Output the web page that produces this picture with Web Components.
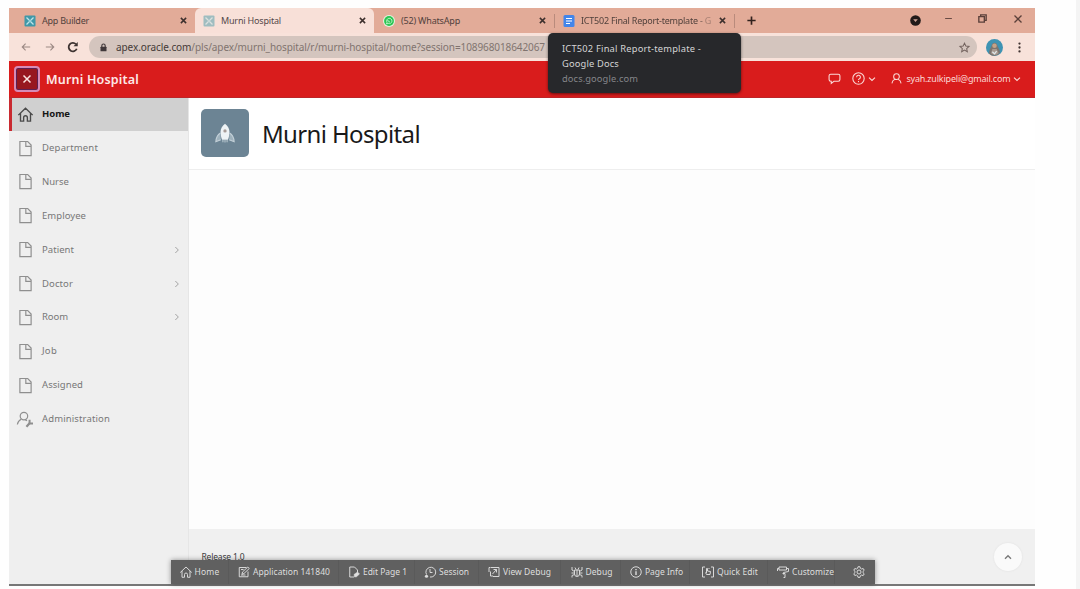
<!DOCTYPE html>
<html lang="en">
<head>
<meta charset="utf-8">
<title>Murni Hospital</title>
<style>
html, body { margin: 0; height: 100%; overflow: hidden; background: #fefefe; }
body { font-family: "Noto Sans", "Open Sans", sans-serif; }
</style>
</head>
<body>
<desktop-page></desktop-page>
<script>
const ICONS = {
  apex: '<rect x="1" y="1" width="22" height="22" rx="2" fill="#3f98a8" stroke="none"/><path d="M5 5l5 5M19 5l-5 5M5 19l5-5M19 19l-5-5" stroke="#bfe3e8" stroke-width="2.6"/><circle cx="12" cy="12" r="3" fill="#9dd3db" stroke="none"/>',
  close: '<path d="M5 5l14 14M19 5L5 19"/>',
  whatsapp: '<circle cx="12" cy="12" r="12" fill="#e4f3df" stroke="none"/><circle cx="12" cy="12" r="9.8" fill="#2ac552" stroke="none"/><path d="M7 18l1-3.500a5.300 5.300 0 1 1 2.400 2.200z" stroke="#d6f7dc" stroke-width="1.600"/><path d="M9.500 10c.5 2.200 2 3.500 4.500 4" stroke="#d6f7dc" stroke-width="1.800"/>',
  docs: '<rect x="1" y="0" width="22" height="24" rx="3" fill="#4285ea" stroke="none"/><path d="M6 7h12M6 12h12M6 17h8" stroke="#fff" stroke-width="2.300"/>',
  plus: '<path d="M12 3v18M3 12h18"/>',
  update: '<circle cx="12" cy="12" r="11.500" fill="#211a19" stroke="none"/><path d="M7 9.500h10l-5 6z" fill="#cfa497" stroke="none"/>',
  min: '<path d="M3 12h18"/>',
  restore: '<path d="M4 8h12v12H4zM8 8V4h12v12h-4"/>',
  back: '<path d="M22 12H3M11 4l-8 8 8 8"/>',
  forward: '<path d="M2 12h19M13 4l8 8-8 8"/>',
  reload: '<path d="M19.500 15.500A8.400 8.400 0 1 1 18 6.500"/><path d="M21.500 2v8.500H13z" fill="currentColor" stroke="none"/>',
  lock: '<rect x="4" y="10" width="16" height="12" rx="1.500" fill="currentColor" stroke="none"/><path d="M7.500 11V7a4.500 4.500 0 0 1 9 0v4"/>',
  star: '<path d="M12 2.500l2.900 6.400 7 .8-5.200 4.700 1.500 6.900L12 17.800l-6.200 3.500 1.500-6.900L2.100 9.700l7-.8z"/>',
  avatar: '<circle cx="12" cy="12" r="12" fill="#3f93b3" stroke="none"/><path d="M4 20C5 14 7 12 8 9c1-5 7-5 8 0 1 3 3 5 4 10-4 6-12 6-16 1z" fill="#7c746f" stroke="none"/><circle cx="12" cy="9.500" r="3.200" fill="#c4a288" stroke="none"/><path d="M7 20l2-6h6l3 6q-5 5-11 0z" fill="#a89a90" stroke="none"/><path d="M9 18l3 3 3-4" stroke="#e0e8ea" stroke-width="1.800"/>',
  dots: '<g fill="currentColor" stroke="none"><circle cx="12" cy="3.500" r="2.500"/><circle cx="12" cy="12" r="2.500"/><circle cx="12" cy="20.500" r="2.500"/></g>',
  chat: '<path d="M5 4h14a3 3 0 0 1 3 3v7a3 3 0 0 1-3 3h-8l-5 4v-4H5a3 3 0 0 1-3-3V7a3 3 0 0 1 3-3z"/>',
  help: '<circle cx="12" cy="12" r="10.500"/><path d="M8.500 9.500a3.500 3.500 0 1 1 4.800 3.200q-1.300.6-1.300 2"/><path d="M12 16.500v2.300"/>',
  user: '<circle cx="12" cy="8" r="6.200"/><path d="M2 22.500q1-7 6.500-9M22 22.500q-1-7-6.500-9"/>',
  down: '<path d="M3 8l9 8.500L21 8"/>',
  up: '<path d="M3 17l9-9 9 9"/>',
  right: '<path d="M7 3l9 9-9 9"/>',
  home: '<path d="M.5 13L12 2l11.500 11M4 10V22.500H9V17a3 3 0 0 1 6 0v5.500h5V10"/>',
  page: '<path d="M3 .8h12.500L21 6.500v17H3zM12.500 1v7.500H21"/>',
  admin: '<circle cx="9.500" cy="6.500" r="6"/><path d="M-1 20q1-6 6-8.500"/><path d="M11.500 12.500l3 1.500"/><path d="M13.500 23.500l5-5.500" stroke-width="3.600"/><path d="M18.500 12.500v6h5.500" stroke-width="3.200"/>',
  rocket: '<path d="M12 1c7 5 6 13 3.500 19h-7C6 14 5 6 12 1z" fill="#eef3f5" stroke="none"/><circle cx="12" cy="9.500" r="2" fill="#a79c98" stroke="none"/><path d="M6.500 12Q1.500 15 1 22.500l6-2.500M17.500 12q5 3 5.500 10.500l-6-2.500" fill="#9fb2bd" stroke="#c3d0d8" stroke-width="1.300"/><path d="M9.500 20.500v2.500M12 20.500v3M14.500 20.500v2.500" stroke="#b9c8d0" stroke-width="1.300"/>',
  edit: '<path d="M17 3H2.500v18.500H20V11"/><path d="M8 16.500l1-4.500L19.500 2l3 3-10.500 10z"/><path d="M6 7h5M6 18h9"/>',
  pageEdit: '<path d="M12 22H3.500V2H13l6 6v5"/><path d="M12 17l1 5 4-.5 6-5.500-4-4z" fill="currentColor" stroke-width="1"/>',
  session: '<path d="M5 17A9.800 9.800 0 1 1 12 22"/><path d="M12 6v7h5"/><circle cx="5" cy="20.500" r="3.200" fill="currentColor" stroke="none"/>',
  viewDebug: '<path d="M6 3h16v18H10M2 3v9M2 3h3"/><path d="M11 7h6v6M17 7l-8 9M5 11v9h5"/>',
  bug: '<path d="M7 8h10v8a5 5 0 0 1-10 0zM12 8v12M2 2v6l5 3M22 2v6l-5 3M1 14h6M17 14h6M2 23v-4l5-2M22 23v-4l-5-2M8 3l2 4M16 3l-2 4"/>',
  info: '<circle cx="12" cy="12" r="10.500"/><path d="M12 10.500V18M12 5.800v2.500" stroke-width="2.800"/>',
  quick: '<path d="M6 2H1v20h5M18 2h5v20h-5"/><path d="M9 17l-2-4M9 17h7l1-6-6-1V5H9v9"/><path d="M13 6l2-2" />',
  paint: '<path d="M4 2h15v6H4zM19 5h4v6l-10 2v4M4 5H1v5"/><path d="M11 15h5v8h-3"/>',
  gear: '<path d="M10 1.500h4l.8 3.200 2.400 1.300 3.200-1 2 3.500-2.400 2.300v2.600l2.400 2.300-2 3.500-3.200-1-2.400 1.300-.8 3.200h-4l-.8-3.200L6.800 18l-3.200 1-2-3.500L4 13.200v-2.600L1.600 8.500l2-3.500 3.200 1 2.400-1.300z"/><circle cx="12" cy="12" r="4"/>'
};

class BaseElement extends HTMLElement {
  connectedCallback() {
    if (this.shadowRoot) return;
    this.attachShadow({ mode: 'open' }).innerHTML = `<style>${this.css()}</style>${this.html()}`;
    this.ready();
  }
  a(n, d = '') { return this.getAttribute(n) ?? d; }
  css() { return ''; }
  html() { return '<slot></slot>'; }
  ready() {}
}

// <ui-icon name size stroke>
customElements.define('ui-icon', class extends BaseElement {
  css() { return `:host{display:block;flex:none;width:${this.a('size', 12)}px;height:${this.a('size', 12)}px} svg{display:block;width:100%;height:100%;overflow:visible}`; }
  html() { return `<svg viewBox="0 0 24 24" fill="none" stroke="currentColor" stroke-width="${this.a('stroke', 2)}">${ICONS[this.a('name')]}</svg>`; }
});

// One line of text whose tracking is adjusted so that it spans `w` pixels.
customElements.define('fit-text', class extends BaseElement {
  css() { return `:host{display:block;flex:none;white-space:nowrap;width:${this.a('w')}px} span{display:inline-block}`; }
  html() { return '<span><slot></slot></span>'; }
  ready() { this.fit(this.textContent.length); }
  fit(n) {
    const s = this.shadowRoot.querySelector('span');
    s.style.letterSpacing = '0px';
    s.style.letterSpacing = ((+this.a('w') - s.getBoundingClientRect().width) / n) + 'px';
  }
});

customElements.define('browser-tab', class extends BaseElement {
  css() { return `:host{display:flex;align-items:center;box-sizing:border-box;height:25px;font-size:9px;line-height:14px;color:#51413c;padding-left:14px}
    :host([active]){background:#f8e0d8;border-radius:6px 6px 0 0;color:#54484a}
    :host([active]) .ic{opacity:.48}
    .ic{margin-right:6px} .x{margin-left:auto;color:#3d302d}`; }
  html() { return `<ui-icon class="ic" name="${this.a('icon')}" size="12"></ui-icon><slot></slot><ui-icon class="x" name="close" size="9" stroke="4"></ui-icon>`; }
});

customElements.define('tab-strip', class extends BaseElement {
  css() { return `:host{display:flex;height:25px;background:#e2ab98;align-items:center}
    browser-tab{flex:none} .t1{width:186px;padding:0 7px 0 15px}.t2{width:179px;padding:0 7px 0 8px}.t3{width:173px;padding:0 0 0 9px}
    .t4{width:180px;padding:0 8px 0 8px}.sep{width:1px;height:14px;background:#b98b7c}
    .t4 fit-text{-webkit-mask-image:linear-gradient(90deg,#000 90%,#0006 96%)}
    .plus{margin-left:11px;color:#31211d}.win{display:flex;align-items:center;margin-left:auto;color:#5b403a}`; }
  html() { return `<browser-tab class="t1" icon="apex"><fit-text w="47">App Builder</fit-text></browser-tab>
    <browser-tab class="t2" icon="apex" active><fit-text w="60">Murni Hospital</fit-text></browser-tab>
    <browser-tab class="t3" icon="whatsapp"><fit-text w="59">(52) WhatsApp</fit-text></browser-tab>
    <span class="sep" style="margin-left:7px"></span>
    <browser-tab class="t4" icon="docs"><fit-text w="130">ICT502 Final Report-template - G</fit-text></browser-tab>
    <span class="sep" style="margin-left:-1px"></span><ui-icon class="plus" name="plus" size="11" stroke="3.6"></ui-icon>
    <div class="win"><ui-icon name="update" size="11"></ui-icon><ui-icon name="min" size="9" stroke="2.4" style="margin:-4px 0 0 23px"></ui-icon><ui-icon name="restore" size="11" stroke="3" style="margin:-4px 0 0 24px"></ui-icon><ui-icon name="close" size="12" stroke="2.6" style="margin:-4px 11px 0 24px"></ui-icon></div>`; }
});

customElements.define('address-bar', class extends BaseElement {
  css() { return `:host{display:flex;align-items:center;box-sizing:border-box;height:28px;background:#f8e2da;color:#9b8984;padding-left:12px}
    .pill{display:flex;align-items:center;box-sizing:border-box;width:888px;height:22px;border-radius:11px;background:#d4c5be;margin-left:10px;padding-left:10px;font-size:10px;line-height:16px;color:#81746f}
    b{font-weight:400;color:#443a38}`; }
  html() { return `<ui-icon name="back" size="10" stroke="2.6"></ui-icon><ui-icon name="forward" size="10" stroke="2.6" style="margin-left:14px"></ui-icon><ui-icon name="reload" size="12" stroke="3.6" style="margin-left:12px;color:#3e3432"></ui-icon>
    <div class="pill"><ui-icon name="lock" size="9" stroke="3" style="color:#40383a"></ui-icon><fit-text w="429" style="margin-left:8px"><b>apex.oracle.com</b>/pls/apex/murni_hospital/r/murni-hospital/home?session=108968018642067</fit-text>
    <ui-icon name="star" size="11" stroke="2.2" style="margin:0 7px 0 auto;color:#73635e"></ui-icon></div>
    <ui-icon name="avatar" size="17" style="margin-left:9px"></ui-icon><ui-icon name="dots" size="11" style="margin-left:11px;color:#403331"></ui-icon>`; }
});

customElements.define('app-header', class extends BaseElement {
  css() { return `:host{display:flex;align-items:center;box-sizing:border-box;height:36.500px;background:#d91c1c;color:#fbd9d6;padding:0 14px 0 5px;border-bottom:1px solid #bd2528}
    .btn{display:flex;align-items:center;justify-content:center;box-sizing:border-box;width:26px;height:26px;border:2px solid #d68bb5;border-radius:4px;background:#97171f;color:#fbe3e0;box-shadow:inset 0 0 0 1px #5b2053}
    .name{font-size:12.500px;font-weight:600;line-height:18px;margin:2px 0 0 6px;color:#fde9e7}
    .r{display:flex;align-items:center;margin-left:auto;font-size:9px;line-height:14px}`; }
  html() { return `<div class="btn"><ui-icon name="close" size="12" stroke="3"></ui-icon></div><fit-text class="name" w="93">Murni Hospital</fit-text>
    <div class="r"><ui-icon name="chat" size="13" stroke="2"></ui-icon><ui-icon name="help" size="13" stroke="2" style="margin-left:11px"></ui-icon><ui-icon name="down" size="8" stroke="3.4" style="margin-left:3px"></ui-icon><ui-icon name="user" size="11" stroke="2.2" style="margin-left:15px"></ui-icon><fit-text w="104" style="margin-left:4px">syah.zulkipeli@gmail.com</fit-text><ui-icon name="down" size="8" stroke="3.400" style="margin-left:3px"></ui-icon></div>`; }
});

customElements.define('nav-item', class extends BaseElement {
  css() { return `:host{display:flex;align-items:center;box-sizing:border-box;height:33.900px;padding:0 7px 0 9px;font-size:9.500px;line-height:16px;color:#777}
    :host([active]){height:33px;margin-bottom:.6px;background:#d0d0d0;color:#161616;font-weight:700;border-left:3px solid #c92a30;padding-left:6px}
    .i{width:15px;display:flex;justify-content:center;color:#8f8f8f;margin-right:9px;flex:none} :host([active]) .i{color:#4a4a4a}
    .c{margin-left:auto;color:#a3a3a3}`; }
  html() { const n = this.a('icon', 'page');
    return `<span class="i"><ui-icon name="${n}" size="15" stroke="${n === 'home' ? 2.2 : 1.9}"></ui-icon></span><fit-text w="${this.a('w')}"><slot></slot></fit-text>${this.hasAttribute('more') ? '<ui-icon class="c" name="right" size="8" stroke="3"></ui-icon>' : ''}`; }
  ready() { this.shadowRoot.querySelector('fit-text').fit(this.textContent.length); }
});

customElements.define('side-nav', class extends BaseElement {
  css() { return `:host{display:block;box-sizing:border-box;width:180px;background:#efefef;border-right:1px solid #e6e6e6}`; }
  html() { return `<nav><nav-item icon="home" w="28" active>Home</nav-item><nav-item w="56">Department</nav-item><nav-item w="27">Nurse</nav-item><nav-item w="44">Employee</nav-item><nav-item w="32" more>Patient</nav-item><nav-item w="31" more>Doctor</nav-item><nav-item w="26" more>Room</nav-item><nav-item w="15">Job</nav-item><nav-item w="41">Assigned</nav-item><nav-item icon="admin" w="68">Administration</nav-item></nav>`; }
});

customElements.define('page-content', class extends BaseElement {
  css() { return `:host{display:flex;flex-direction:column;flex:1;background:#fdfdfd}
    header{display:flex;align-items:center;box-sizing:border-box;height:72px;background:#fff;border-bottom:1px solid #eee;padding:0 0 0 12.400px}
    .logo{display:flex;align-items:center;justify-content:center;width:48px;height:48px;border-radius:5px;background:#6c8494}
    h1{margin:2px 0 0 12.600px;font-size:24px;line-height:34px;font-weight:400;color:#191919}
    main{flex:1}
    footer{display:flex;box-sizing:border-box;height:55px;background:#f0f0f0;padding:20px 13px 0 12.500px;font-size:8.500px;line-height:16px;color:#3c3c3c}
    .top{display:flex;align-items:center;justify-content:center;width:28px;height:28px;border-radius:50%;background:#fafafa;box-shadow:0 0 2px #ddd;margin:-6px 0 0 auto;color:#787878}`; }
  html() { return `<header><div class="logo"><ui-icon name="rocket" size="20"></ui-icon></div><h1><fit-text w="158">Murni Hospital</fit-text></h1></header><main></main>
    <footer><fit-text w="43">Release 1.0</fit-text><div class="top"><ui-icon name="up" size="8" stroke="4"></ui-icon></div></footer>`; }
});

customElements.define('dev-toolbar', class extends BaseElement {
  css() { return `:host{display:flex;height:24px;background:#606060;color:#dedede;font-size:8.500px;line-height:14px;box-shadow:0 0 5px #0006}
    div{display:flex;align-items:center;box-sizing:border-box;padding-left:9px;border-right:1px solid #5a5a5a}
    fit-text{margin-left:3px}`; }
  html() {
    return [['home', 58.5, 25, 'Home'], ['edit', 110, 77, 'Application 141840'], ['pageEdit', 76, 44, 'Edit Page 1'], ['session', 64, 30, 'Session'], ['viewDebug', 82, 48, 'View Debug'], ['bug', 60, 27, 'Debug'], ['info', 69, 38, 'Page Info'], ['quick', 78, 41, 'Quick Edit'], ['paint', 67, 42, 'Customize'], ['gear', 39.5, 0, '']]
      .map(([i, w, t, s]) => `<div style="width:${w}px${i === 'quick' ? ';padding-left:12px' : i === 'bug' ? ';padding-left:9.5px' : i === 'gear' ? ';padding-left:17.5px;border:0' : ''}"><ui-icon name="${i}" size="12" stroke="1.900"></ui-icon>${s ? `<fit-text w="${t}">${s}</fit-text>` : ''}</div>`).join('');
  }
});

customElements.define('tab-tooltip', class extends BaseElement {
  css() { return `:host{display:block;box-sizing:border-box;width:193px;height:60px;border-radius:5px;background:#27282b;color:#d5d5d6;padding:8px 14px;font-size:9.300px;line-height:15px;box-shadow:0 1px 3px #0008} .u{color:#85868a}`; }
  html() { return `<fit-text w="139">ICT502 Final Report-template -</fit-text><fit-text w="57">Google Docs</fit-text><fit-text class="u" w="76">docs.google.com</fit-text>`; }
});

customElements.define('desktop-page', class extends BaseElement {
  css() { return `:host{display:flex;justify-content:space-between;box-sizing:border-box;width:1080px;height:589px;padding:8px 0 0 9px}
    .win{position:relative;display:flex;flex-direction:column;width:1026.400px;height:577.500px;box-sizing:border-box;border-bottom:2px solid #777}
    .body{display:flex;flex:1;min-height:0}
    tab-tooltip{position:absolute;left:539px;top:25px}
    dev-toolbar{position:absolute;left:161.500px;bottom:0}
    .edge{width:4px;height:589px;margin-top:-8px;background:#f4f4f4}`; }
  html() { return `<section class="win"><tab-strip></tab-strip><address-bar></address-bar><app-header></app-header><div class="body"><side-nav></side-nav><page-content></page-content></div><tab-tooltip></tab-tooltip><dev-toolbar></dev-toolbar></section><div class="edge"></div>`; }
});
</script>
</body>
</html>
